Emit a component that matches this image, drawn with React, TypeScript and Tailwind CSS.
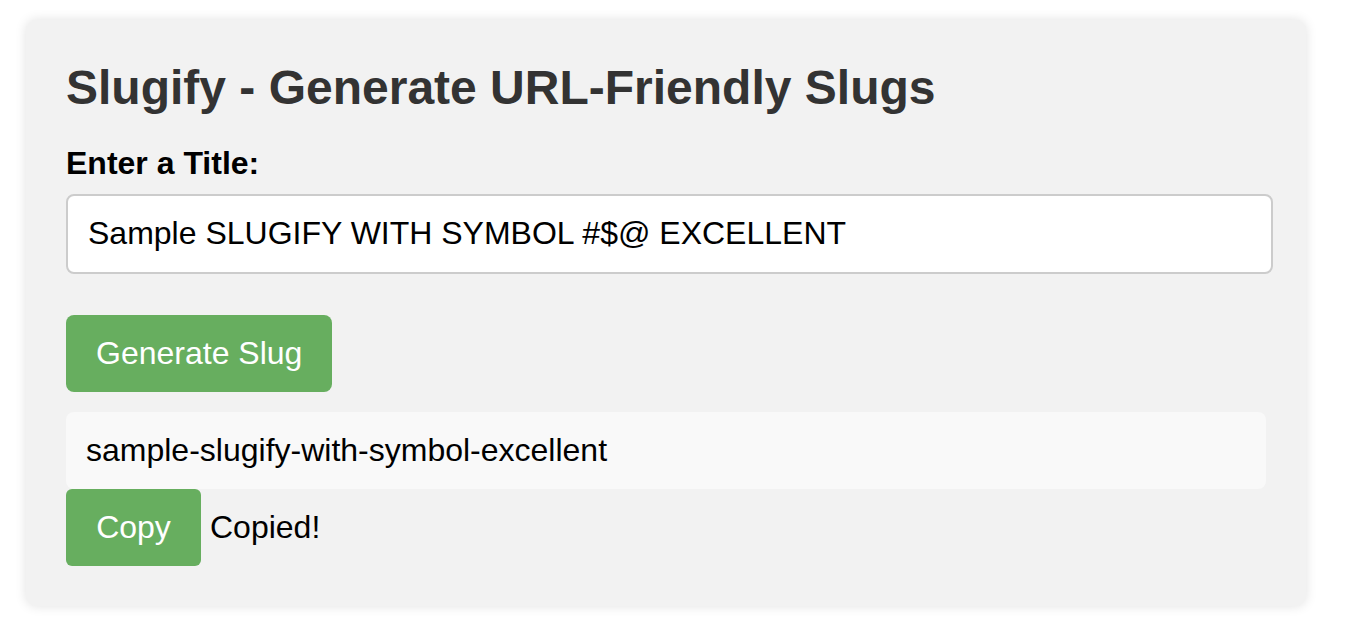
import React, { useState } from "react";

const slugify = (text: string) =>
  text
    .toLowerCase()
    .replace(/[^a-z0-9\s-]/g, "")
    .trim()
    .replace(/\s+/g, "-")
    .replace(/-+/g, "-");

export default function App() {
  const [title, setTitle] = useState("Sample SLUGIFY WITH SYMBOL #$@ EXCELLENT");
  const [slug, setSlug] = useState(slugify("Sample SLUGIFY WITH SYMBOL #$@ EXCELLENT"));
  const [copied, setCopied] = useState(true);

  const handleGenerate = () => {
    setSlug(slugify(title));
    setCopied(false);
  };

  const handleCopy = () => {
    navigator.clipboard?.writeText(slug).catch(() => {});
    setCopied(true);
  };

  return (
    <div className="min-h-screen bg-white font-['Liberation_Sans',Arial,sans-serif] pt-[20px]">
      <div className="ml-[26px] w-[1280px] rounded-[10px] bg-[#f2f2f2] px-[40px] pt-[40px] pb-[40px] shadow-[0_0_12px_rgba(0,0,0,0.12)]">
        <h2 className="text-[48px] font-bold leading-[1.15] text-[#333]">
          Slugify - Generate URL-Friendly Slugs
        </h2>

        <label className="mt-[30px] mb-[12px] block text-[32px] font-bold leading-[1.15] text-black">
          Enter a Title:
        </label>
        <input
          value={title}
          onChange={(e) => setTitle(e.target.value)}
          className="block h-[80px] w-[1207px] rounded-[8px] border-2 border-[#cccccc] bg-white px-[20px] text-[32px] text-black outline-none"
        />

        <button
          onClick={handleGenerate}
          className="mt-[41px] h-[77px] rounded-[8px] bg-[#67ae5f] px-[30px] text-[32px] text-white"
        >
          Generate Slug
        </button>

        <div className="mt-[20px] flex h-[77px] w-[1200px] items-center rounded-[8px] bg-[#f9f9f9] px-[20px] text-[32px] text-black">
          {slug}
        </div>

        <div className="flex items-center">
          <button
            onClick={handleCopy}
            className="h-[77px] w-[135px] rounded-[6px] bg-[#67ae5f] text-[32px] text-white"
          >
            Copy
          </button>
          {copied && <span className="ml-[9px] text-[32px] text-black">Copied!</span>}
        </div>
      </div>
    </div>
  );
}
